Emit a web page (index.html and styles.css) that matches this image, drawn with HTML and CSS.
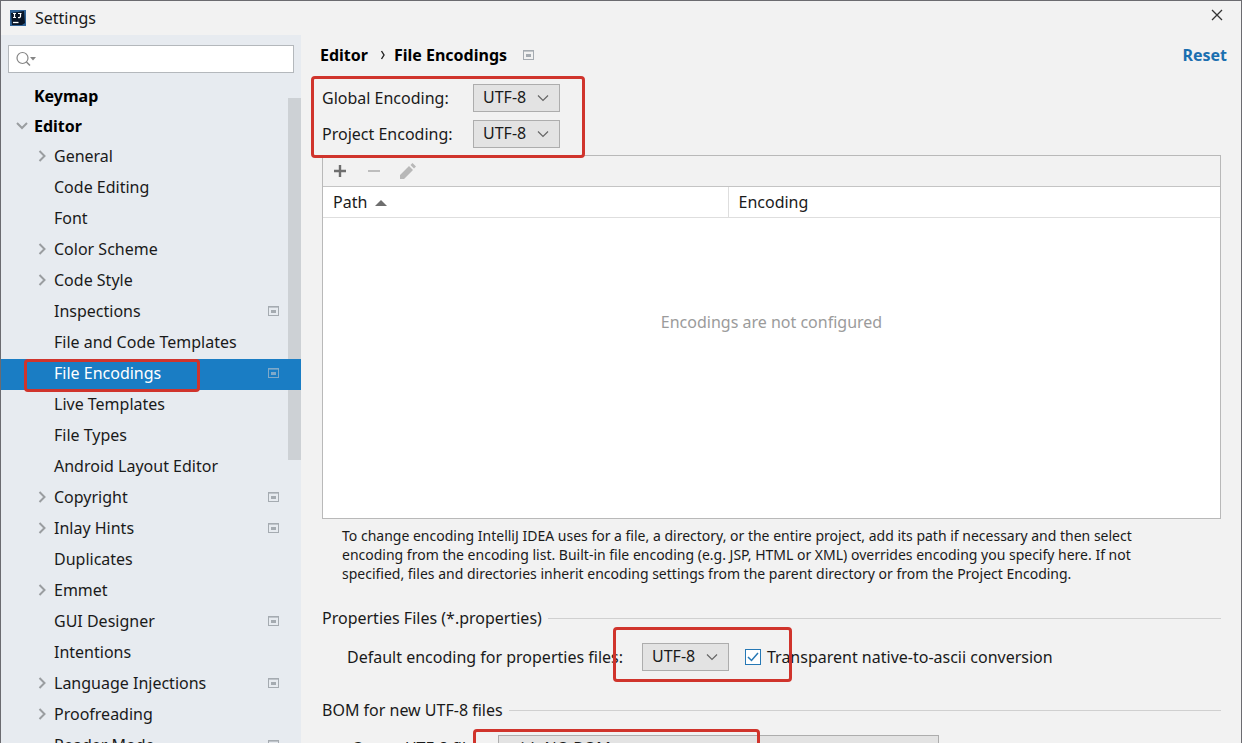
FILE: index.html
```html
<!DOCTYPE html>
<html lang="en">
<head>
  <meta charset="UTF-8">
  <title>Settings</title>
  <meta name="viewport" content="width=device-width, initial-scale=1.0">
  <link rel="stylesheet" href="styles.css">
</head>
<body>

<!-- shared icons -->
<svg class="sprite" aria-hidden="true">
  <symbol id="project" viewBox="0 0 12 11">
    <rect x="0.5" y="0.5" width="10" height="9" fill="none" stroke="currentColor"/>
    <path d="M1 1.5h9" stroke="currentColor" opacity="0.6"/>
    <rect x="3" y="4" width="5" height="3" fill="currentColor"/>
  </symbol>
  <symbol id="right" viewBox="0 0 12 12">
    <path d="M3.5 1L8.5 6l-5 5" fill="none" stroke="currentColor" stroke-width="2"/>
  </symbol>
  <symbol id="down" viewBox="0 0 12 12">
    <path d="M1 3l5 5 5-5" fill="none" stroke="currentColor" stroke-width="2"/>
  </symbol>
  <symbol id="drop" viewBox="0 0 12 8">
    <path d="M1 1.5l5 5 5-5" fill="none" stroke="currentColor" stroke-width="1.2"/>
  </symbol>
</svg>

<div class="window">
  <header class="titlebar">
    <svg class="logo" viewBox="0 0 16 16" aria-hidden="true">
      <rect width="16" height="16" fill="#2f6296"/>
      <path d="M1 3L14 1l1 12-3 2H2z" fill="#071426"/>
      <path d="M3 3.5h3M4.5 3.5v4M3 7.5h3M8 3.5h3.5M10.5 3.5v3q0 1.2-2.5 1" fill="none" stroke="#fff" stroke-width="1.2"/>
      <path d="M3 12.5h5.5" stroke="#fff" stroke-width="1.3"/>
    </svg>
    <h1>Settings</h1>
    <button class="close" aria-label="Close">
      <svg viewBox="0 0 12 12"><path d="M1 1l10 10M11 1L1 11" stroke="#333" stroke-width="1.3"/></svg>
    </button>
  </header>

  <div class="content">
    <aside class="sidebar">
      <div class="search">
        <svg viewBox="0 0 22 16" aria-hidden="true">
          <circle cx="6.5" cy="7" r="5.5" fill="none" stroke="#858585" stroke-width="1.2"/>
          <path d="M10.5 11l3.5 3.5" stroke="#858585" stroke-width="1.5"/>
          <path d="M14 6h6l-3 3.5z" fill="#858585"/>
        </svg>
        <input type="text" aria-label="Search settings">
      </div>
      <nav class="tree">
        <div class="thumb"></div>
        <a href="#" class="row top"><span>Keymap</span></a>
        <a href="#" class="row top"><svg class="arrow"><use href="#down"/></svg><span>Editor</span></a>
        <a href="#" class="row"><svg class="arrow"><use href="#right"/></svg><span>General</span></a>
        <a href="#" class="row"><span>Code Editing</span></a>
        <a href="#" class="row"><span>Font</span></a>
        <a href="#" class="row"><svg class="arrow"><use href="#right"/></svg><span>Color Scheme</span></a>
        <a href="#" class="row"><svg class="arrow"><use href="#right"/></svg><span>Code Style</span></a>
        <a href="#" class="row"><span>Inspections</span><svg class="project"><use href="#project"/></svg></a>
        <a href="#" class="row"><span>File and Code Templates</span></a>
        <a href="#" class="row selected"><span>File Encodings</span><svg class="project"><use href="#project"/></svg></a>
        <a href="#" class="row"><span>Live Templates</span></a>
        <a href="#" class="row"><span>File Types</span></a>
        <a href="#" class="row"><span>Android Layout Editor</span></a>
        <a href="#" class="row"><svg class="arrow"><use href="#right"/></svg><span>Copyright</span><svg class="project"><use href="#project"/></svg></a>
        <a href="#" class="row"><svg class="arrow"><use href="#right"/></svg><span>Inlay Hints</span><svg class="project"><use href="#project"/></svg></a>
        <a href="#" class="row"><span>Duplicates</span></a>
        <a href="#" class="row"><svg class="arrow"><use href="#right"/></svg><span>Emmet</span></a>
        <a href="#" class="row"><span>GUI Designer</span><svg class="project"><use href="#project"/></svg></a>
        <a href="#" class="row"><span>Intentions</span></a>
        <a href="#" class="row"><svg class="arrow"><use href="#right"/></svg><span>Language Injections</span><svg class="project"><use href="#project"/></svg></a>
        <a href="#" class="row"><svg class="arrow"><use href="#right"/></svg><span>Proofreading</span></a>
        <a href="#" class="row"><span>Reader Mode</span><svg class="project"><use href="#project"/></svg></a>
      </nav>
    </aside>

    <main class="main">
      <div class="breadcrumb">
        <span>Editor</span>
        <svg class="sep" viewBox="0 0 6 12"><path d="M1.5 2L4 6l-2.5 4" fill="none" stroke="#222" stroke-width="1.4"/></svg>
        <h2>File Encodings</h2>
        <svg class="project"><use href="#project"/></svg>
        <a href="#" class="reset">Reset</a>
      </div>

      <div class="encodings">
        <label for="global">Global Encoding:</label>
        <div class="combo">
          <select id="global"><option>UTF-8</option></select>
          <svg><use href="#drop"/></svg>
        </div>
        <label for="project-enc">Project Encoding:</label>
        <div class="combo">
          <select id="project-enc"><option>UTF-8</option></select>
          <svg><use href="#drop"/></svg>
        </div>
      </div>

      <div class="panel">
        <div class="toolbar">
          <button aria-label="Add"><svg viewBox="0 0 16 16"><path d="M2 8h12M8 2v12" stroke="#6e6e6e" stroke-width="2.4"/></svg></button>
          <button aria-label="Remove" disabled><svg viewBox="0 0 16 16"><path d="M2 8h12" stroke="#bdbdbd" stroke-width="2"/></svg></button>
          <button aria-label="Edit" disabled><svg viewBox="0 0 16 16"><path d="M0 16v-4l9-9 4 4-9 9zM10.5 2l2-2L16 3.5l-2 2z" fill="#b8b8b8"/></svg></button>
        </div>
        <table>
          <thead>
            <tr>
              <th class="path">Path <svg viewBox="0 0 12 7"><path d="M0 7l6-6 6 6z" fill="#6e6e6e"/></svg></th>
              <th>Encoding</th>
            </tr>
          </thead>
          <tbody>
            <tr><td colspan="2">Encodings are not configured</td></tr>
          </tbody>
        </table>
      </div>

      <p class="hint">To change encoding IntelliJ IDEA uses for a file, a directory, or the entire project, add its path if necessary and then select<br>
        encoding from the encoding list. Built-in file encoding (e.g. JSP, HTML or XML) overrides encoding you specify here. If not<br>
        specified, files and directories inherit encoding settings from the parent directory or from the Project Encoding.</p>

      <h3>Properties Files (*.properties)</h3>
      <div class="setting">
        <label for="props">Default encoding for properties files:</label>
        <div class="marked">
          <div class="combo">
            <select id="props"><option>UTF-8</option></select>
            <svg><use href="#drop"/></svg>
          </div>
          <input type="checkbox" id="ascii" checked>
        </div>
        <label for="ascii">Transparent native-to-ascii conversion</label>
      </div>

      <h3>BOM for new UTF-8 files</h3>
      <div class="setting bom">
        <label for="bom">Create UTF-8 files:</label>
        <div class="combo wide">
          <select id="bom"><option>with NO BOM</option></select>
          <svg><use href="#drop"/></svg>
        </div>
      </div>
    </main>
  </div>
</div>

</body>
</html>
```

FILE: styles.css
```css
* {
  box-sizing: border-box;
}

body {
  margin: 0;
  font-family: 'Noto Sans', 'Open Sans', sans-serif;
  font-size: 16px;
  line-height: 22px;
  color: #1a1a1a;
}

h1, h2, h3, p {
  margin: 0;
  font-size: 16px;
  font-weight: 400;
}

a {
  color: inherit;
  text-decoration: none;
}

button {
  padding: 0;
  border: none;
  background: none;
}

svg {
  display: block;
  flex: none;
}

.sprite {
  position: absolute;
  width: 0;
  height: 0;
}

.window {
  height: 100vh;
  display: flex;
  flex-direction: column;
  overflow: hidden;
  background-color: #f2f2f2;
  border: 1px solid #6b6b70;
  border-bottom: none;
}

/* title bar */
.titlebar {
  display: flex;
  align-items: center;
  height: 34px;
  padding: 0 18px 0 9px;
  flex: none;
}

.logo {
  width: 16px;
  height: 16px;
  margin-right: 9px;
}

.close {
  margin-left: auto;
  padding-bottom: 6px;
}

.close svg {
  width: 12px;
  height: 12px;
}

.content {
  display: flex;
  flex: 1;
  min-height: 0;
}

/* sidebar */
.sidebar {
  width: 300px;
  flex: none;
  background-color: #e7ebf0;
  overflow: hidden;
}

.search {
  display: flex;
  align-items: center;
  height: 28px;
  margin: 10px 7px 7px;
  padding-left: 7px;
  background-color: #fff;
  border: 1px solid #b4b8bc;
}

.search svg {
  width: 22px;
  height: 16px;
}

.search input {
  flex: 1;
  min-width: 0;
  border: none;
  outline: none;
  font: inherit;
}

.tree {
  position: relative;
  padding-top: 2px;
}

.thumb {
  position: absolute;
  top: 18px;
  right: 0;
  width: 13px;
  height: 362px;
  background-color: #cdd1d5;
}

.row {
  position: relative;
  display: grid;
  grid-template-columns: 12px 1fr 12px;
  column-gap: 6px;
  align-items: center;
  height: 31px;
  padding: 0 21px 3px 35px;
  white-space: nowrap;
}

.row span {
  grid-column: 2;
  grid-row: 1;
}

.row.top {
  height: 30px;
  padding-left: 15px;
  font-weight: 700;
  color: #000;
}

.row.selected {
  background-color: #1a7dc4;
  color: #fff;
}

.arrow {
  grid-row: 1;
  width: 12px;
  height: 12px;
  color: #9a9da0;
}

.project {
  grid-column: 3;
  grid-row: 1;
  width: 12px;
  height: 11px;
  color: #a5abb1;
}

.selected .project {
  color: #7fa9c9;
}

/* right side */
.main {
  flex: 1;
  min-width: 0;
  padding: 8px 20px 0 21px;
}

.breadcrumb {
  display: flex;
  align-items: center;
  height: 24px;
  margin: 0 -6px 17px -2px;
  font-weight: 700;
  color: #000;
}

.breadcrumb h2 {
  font-weight: 700;
  margin-right: 16px;
}

.sep {
  width: 6px;
  height: 12px;
  margin: 0 8px 0 12px;
}

.reset {
  margin-left: auto;
  color: #1a6fb0;
}

.encodings {
  position: relative;
  display: grid;
  grid-template-columns: 151px auto;
  justify-content: start;
  align-items: center;
  row-gap: 8px;
  width: max-content;
}

.combo {
  position: relative;
  width: 87px;
}

.combo select {
  display: block;
  width: 100%;
  height: 28px;
  padding: 0 0 2px 9px;
  appearance: none;
  background-color: #e3e3e3;
  border: 1px solid #adadad;
  border-radius: 0;
  font: inherit;
  color: inherit;
}

.combo svg {
  position: absolute;
  right: 11px;
  top: 10px;
  width: 12px;
  height: 8px;
  color: #666;
  pointer-events: none;
}

.combo.wide {
  width: 441px;
}

/* red highlight frames */
.encodings::after,
.selected::after,
.marked::after,
.bom::after {
  content: '';
  position: absolute;
  border: 3px solid #d0342c;
  border-radius: 4px;
  pointer-events: none;
}

.encodings::after {
  inset: -8px -25px -10px -11px;
}

.selected::after {
  inset: 0 101px -2px 23px;
}

.marked::after {
  inset: -16px -31px -11px -29px;
}

.bom::after {
  left: 151px;
  top: -6px;
  width: 281px;
  height: 54px;
}

/* table */
.panel {
  margin-top: 7px;
  border: 1px solid #b9b9b9;
}

.toolbar {
  display: flex;
  align-items: center;
  gap: 18px;
  height: 31px;
  padding-left: 9px;
  border-bottom: 1px solid #c4c4c4;
}

.toolbar svg {
  width: 16px;
  height: 16px;
}

table {
  width: 100%;
  border-collapse: collapse;
  background-color: #fff;
}

th {
  height: 30px;
  padding: 0 10px;
  border-bottom: 1px solid #dedede;
  text-align: left;
  font-weight: 400;
}

th.path {
  width: 405px;
  border-right: 1px solid #dedede;
}

th svg {
  display: inline-block;
  width: 12px;
  height: 7px;
  margin: 0 0 2px 4px;
}

td {
  height: 301px;
  padding: 0 0 92px;
  text-align: center;
  color: #9b9b9b;
}

.hint {
  padding: 7px 0 0 20px;
  font-size: 14px;
  line-height: 19px;
  white-space: nowrap;
}

h3 {
  display: flex;
  align-items: center;
  gap: 6px;
  margin-top: 24px;
}

h3::after {
  content: '';
  flex: 1;
  border-top: 1px solid #d0d0d0;
}

.setting {
  position: relative;
  display: flex;
  align-items: center;
  margin: 14px 0 28px;
  padding-left: 25px;
  white-space: nowrap;
}

.marked {
  position: relative;
  display: flex;
  align-items: center;
  gap: 16px;
  margin: 0 6px 0 19px;
}

.setting input {
  appearance: none;
  width: 16px;
  height: 16px;
  margin: 0;
  background: #fff url("data:image/svg+xml,%3Csvg xmlns='http://www.w3.org/2000/svg' viewBox='0 0 14 14'%3E%3Cpath d='M2 7l3.5 3.5L12 3' fill='none' stroke='%232678b5' stroke-width='1.5'/%3E%3C/svg%3E");
  border: 1px solid #2678b5;
}

.bom label {
  width: 140px;
  padding-bottom: 2px;
  text-align: right;
}

.bom .combo {
  margin-left: 11px;
}
```
